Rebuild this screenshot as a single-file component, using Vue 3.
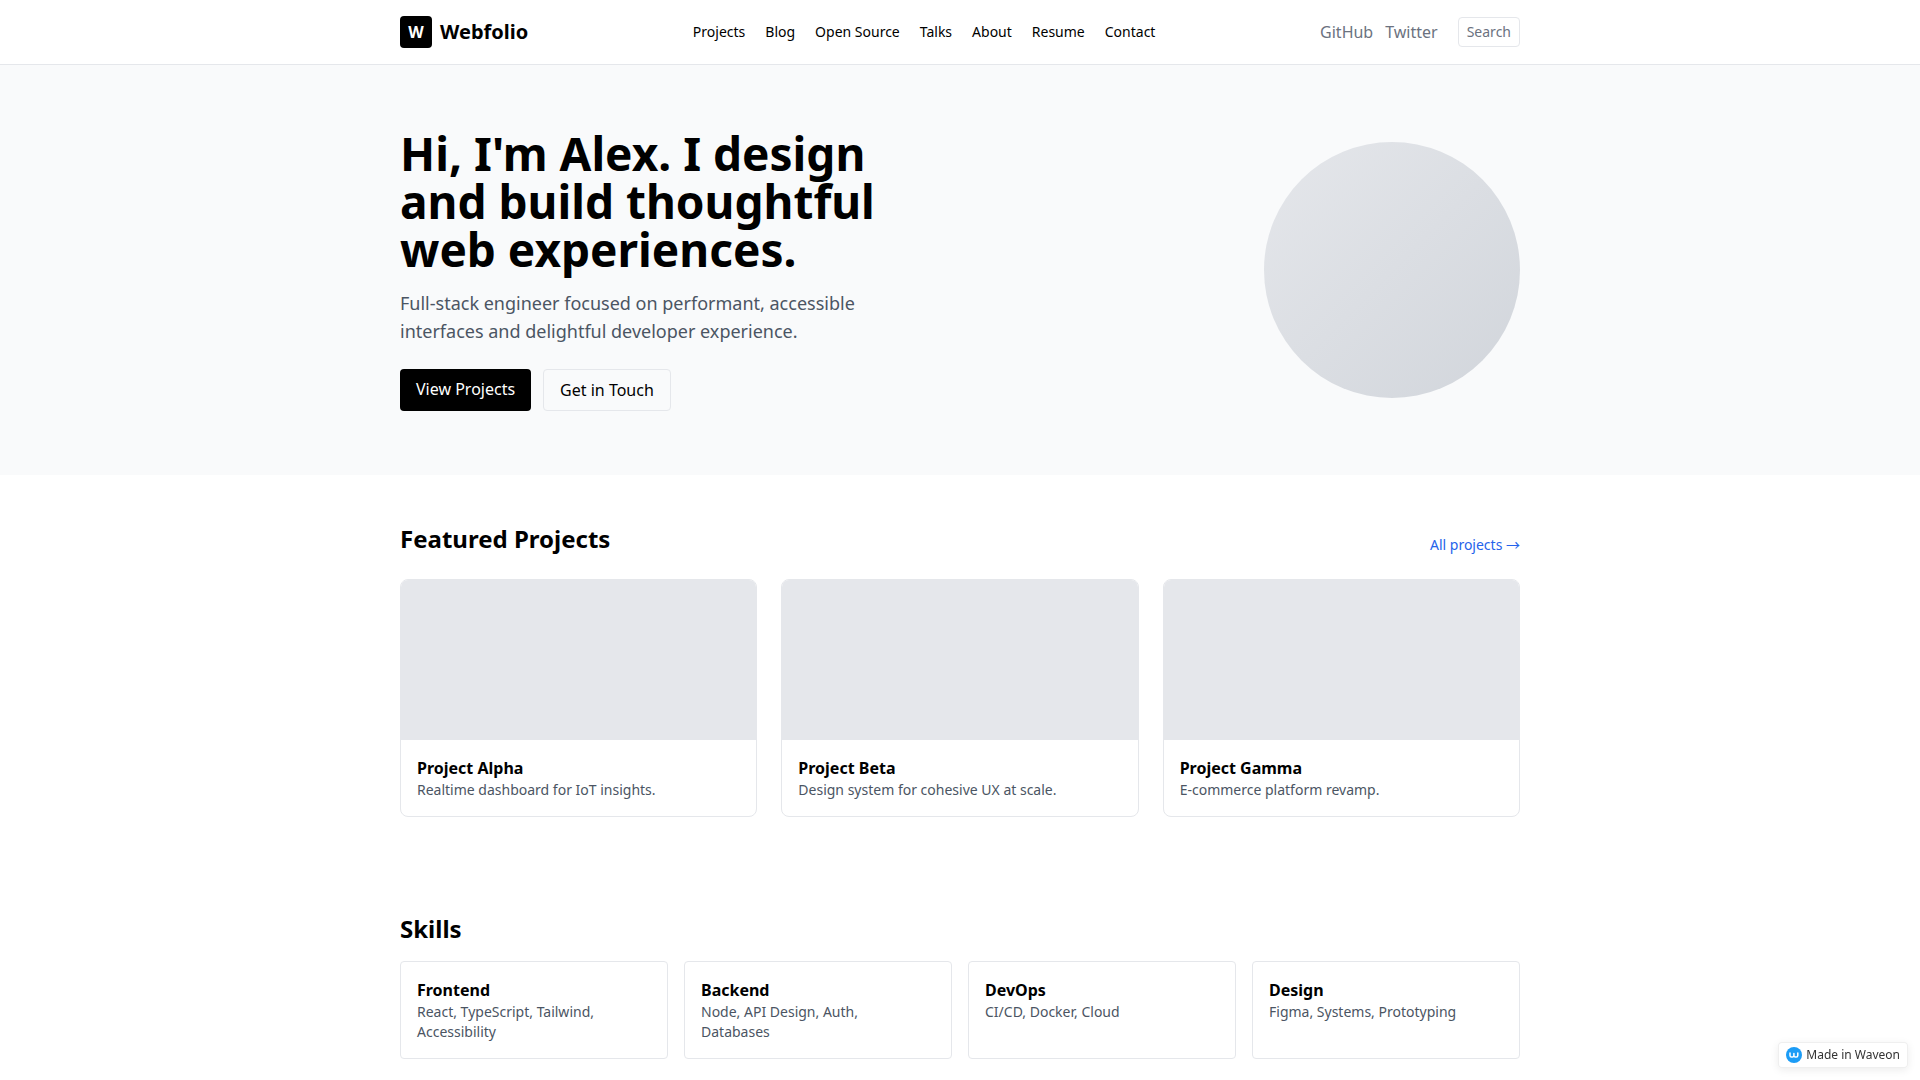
<template>
  <div class="page">
    <header class="header">
      <div class="container header-inner">
        <a href="#" class="brand">
          <span class="brand-mark">W</span>
          <span class="brand-name">Webfolio</span>
        </a>
        <nav class="nav">
          <a v-for="item in navItems" :key="item" href="#">{{ item }}</a>
        </nav>
        <div class="header-side">
          <div class="socials">
            <a href="#">GitHub</a>
            <a href="#">Twitter</a>
          </div>
          <button type="button" class="search">Search</button>
        </div>
      </div>
    </header>

    <main>
      <section class="hero">
        <div class="container hero-inner">
          <div class="hero-copy">
            <h1>Hi, I'm Alex. I design<br />and build thoughtful<br />web experiences.</h1>
            <p>Full-stack engineer focused on performant, accessible interfaces and delightful developer experience.</p>
            <div class="actions">
              <a href="#" class="btn btn-primary">View Projects</a>
              <a href="#" class="btn btn-outline">Get in Touch</a>
            </div>
          </div>
          <div class="avatar"></div>
        </div>
      </section>

      <section class="container section">
        <div class="section-head">
          <h2>Featured Projects</h2>
          <a href="#">All projects <span class="arrow">→</span></a>
        </div>
        <div class="projects">
          <article v-for="project in projects" :key="project.title" class="project">
            <div class="thumb"></div>
            <div class="project-body">
              <h3>{{ project.title }}</h3>
              <p>{{ project.text }}</p>
            </div>
          </article>
        </div>
      </section>

      <section class="container section">
        <h2>Skills</h2>
        <div class="skills">
          <article v-for="skill in skills" :key="skill.title" class="skill">
            <h3>{{ skill.title }}</h3>
            <p>{{ skill.text }}</p>
          </article>
        </div>
      </section>
    </main>

    <a href="#" class="badge">
      <svg width="16" height="16" viewBox="0 0 16 16" aria-hidden="true">
        <circle cx="8" cy="8" r="8" fill="#1c9cf6" />
        <path
          d="M4 6v2.4a1.6 1.6 0 0 0 1.6 1.6h.7a1.6 1.6 0 0 0 1.6-1.6V6.4M7.9 8.4a1.6 1.6 0 0 0 1.6 1.6h.7a1.6 1.6 0 0 0 1.6-1.6V6"
          fill="none"
          stroke="#fff"
          stroke-width="1.5"
          stroke-linecap="round"
          stroke-linejoin="round"
        />
      </svg>
      <span>Made in Waveon</span>
    </a>
  </div>
</template>

<script setup>
const navItems = ['Projects', 'Blog', 'Open Source', 'Talks', 'About', 'Resume', 'Contact'];

const projects = [
  { title: 'Project Alpha', text: 'Realtime dashboard for IoT insights.' },
  { title: 'Project Beta', text: 'Design system for cohesive UX at scale.' },
  { title: 'Project Gamma', text: 'E-commerce platform revamp.' },
];

const skills = [
  { title: 'Frontend', text: 'React, TypeScript, Tailwind,\nAccessibility' },
  { title: 'Backend', text: 'Node, API Design, Auth,\nDatabases' },
  { title: 'DevOps', text: 'CI/CD, Docker, Cloud' },
  { title: 'Design', text: 'Figma, Systems, Prototyping' },
];
</script>

<style>
body {
  margin: 0;
  background: #fff;
}
</style>

<style scoped>
.page {
  font-family: 'Noto Sans', sans-serif;
  font-size: 16px;
  line-height: 24px;
  color: #000;
}

.page *,
.page {
  box-sizing: border-box;
}

h1,
h2,
h3,
p {
  margin: 0;
}

a {
  color: inherit;
  text-decoration: none;
}

button {
  font: inherit;
  cursor: pointer;
}

.container {
  max-width: 1152px;
  margin: 0 auto;
  padding: 0 16px;
}

.header {
  border-bottom: 1px solid #e5e7eb;
  background: #fff;
}

.header-inner {
  display: flex;
  align-items: center;
  justify-content: space-between;
  height: 64px;
}

.brand {
  display: flex;
  align-items: center;
  gap: 8px;
}

.brand-mark {
  display: flex;
  align-items: center;
  justify-content: center;
  width: 32px;
  height: 32px;
  border-radius: 4px;
  background: #000;
  color: #fff;
  font-weight: 700;
}

.brand-name {
  font-size: 20px;
  line-height: 28px;
  font-weight: 700;
}

.nav {
  display: flex;
  gap: 20px;
  font-size: 14px;
  line-height: 20px;
}

.header-side {
  display: flex;
  align-items: center;
  gap: 20px;
  color: #6b7280;
}

.socials {
  display: flex;
  gap: 12px;
}

.search {
  padding: 4px 8px;
  border: 1px solid #e5e7eb;
  border-radius: 4px;
  background: #fff;
  color: #6b7280;
  font-size: 14px;
  line-height: 20px;
}

.hero {
  padding: 64px 0;
  background: #f9fafb;
}

.hero-inner {
  display: flex;
  align-items: center;
  justify-content: space-between;
}

.hero-copy h1 {
  font-size: 46px;
  line-height: 48px;
  font-weight: 700;
}

.hero-copy p {
  max-width: 512px;
  margin-top: 16px;
  color: #4b5563;
  font-size: 18px;
  line-height: 28px;
}

.actions {
  display: flex;
  gap: 12px;
  margin-top: 24px;
}

.btn {
  padding: 8px 16px;
  border-radius: 4px;
}

.btn-primary {
  background: #000;
  color: #fff;
}

.btn-outline {
  border: 1px solid #e5e7eb;
}

.avatar {
  width: 256px;
  height: 256px;
  border-radius: 50%;
  background: linear-gradient(to bottom right, #e5e7eb, #d1d5db);
}

.section {
  padding-top: 48px;
  padding-bottom: 48px;
}

.section h2 {
  font-size: 24px;
  line-height: 32px;
  font-weight: 700;
}

.section-head {
  display: flex;
  align-items: flex-end;
  justify-content: space-between;
  margin-bottom: 24px;
}

.section-head a {
  color: #2563eb;
  font-size: 14px;
  line-height: 20px;
}

.arrow {
  font-family: 'Noto Sans CJK SC', sans-serif;
  line-height: 1;
}

h3 {
  font-size: 16px;
  line-height: 24px;
  font-weight: 700;
}

.projects {
  display: grid;
  grid-template-columns: repeat(3, 1fr);
  gap: 24px;
}

.project {
  overflow: hidden;
  border: 1px solid #e5e7eb;
  border-radius: 8px;
}

.thumb {
  height: 160px;
  background: #e5e7eb;
}

.project-body {
  padding: 16px;
}

.project p,
.skill p {
  color: #4b5563;
  font-size: 14px;
  line-height: 20px;
  white-space: pre-line;
}

.skills {
  display: grid;
  grid-template-columns: repeat(4, 1fr);
  gap: 16px;
  margin-top: 16px;
}

.skill {
  padding: 16px;
  border: 1px solid #e5e7eb;
  border-radius: 4px;
}

.badge {
  position: fixed;
  right: 12px;
  bottom: 12px;
  display: flex;
  align-items: center;
  gap: 4px;
  padding: 5px 8px;
  border-radius: 4px;
  background: #fff;
  box-shadow:
    inset 0 0 0 1px #efefef,
    0 2px 8px rgba(0, 0, 0, 0.08);
  color: #333;
  font-size: 12px;
  line-height: 16px;
}
</style>
